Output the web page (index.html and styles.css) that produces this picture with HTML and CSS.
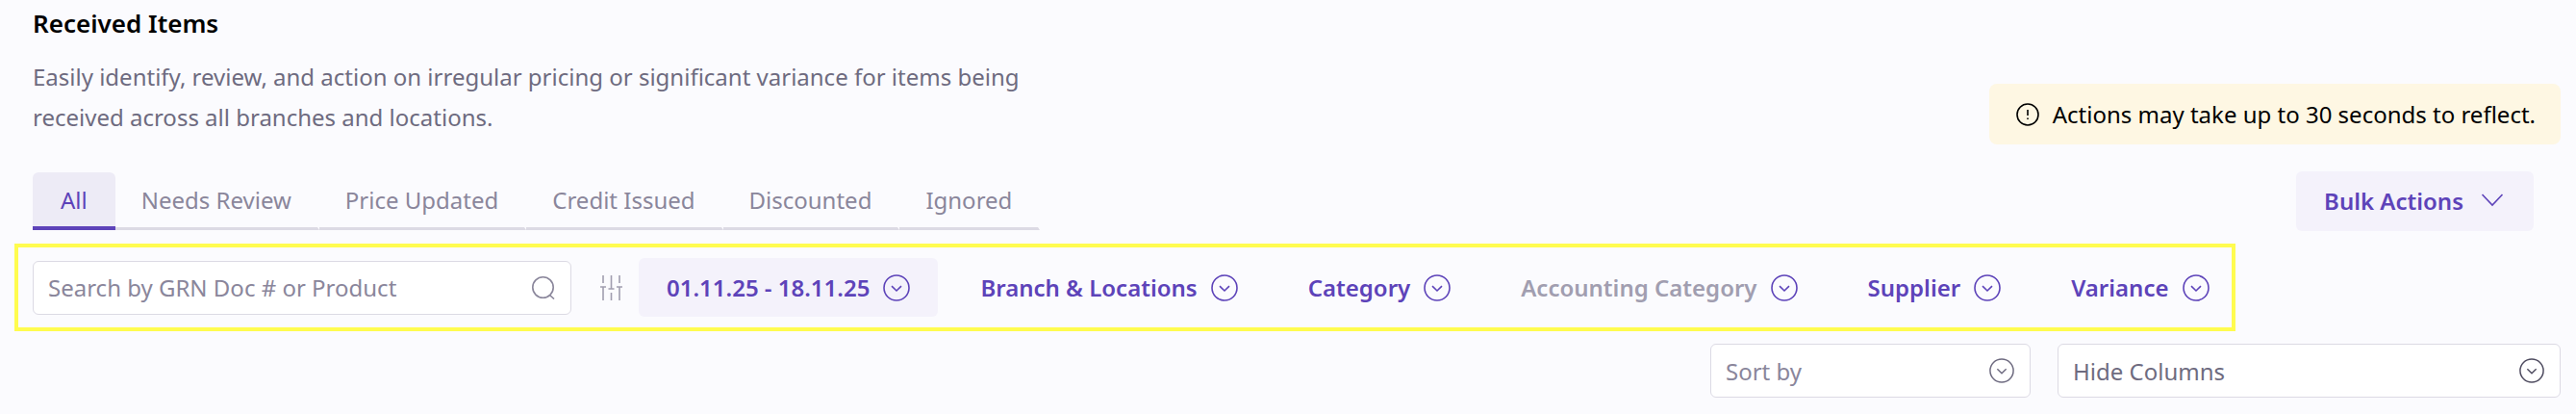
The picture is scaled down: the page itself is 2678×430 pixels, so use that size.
FILE: index.html
```html
<!DOCTYPE html>
<html lang="en">
<head>
  <meta charset="UTF-8">
  <title>Received Items</title>
  <link rel="stylesheet" href="styles.css">
</head>
<body>
  <!-- shared icons -->
  <svg class="sprite" aria-hidden="true">
    <symbol id="circle-chevron" viewBox="0 0 28 28">
      <circle cx="14" cy="14" r="13"/>
      <path d="M9 12.2l5 4.8 5-4.8"/>
    </symbol>
  </svg>

  <header class="page-header">
    <div class="intro">
      <h1>Received Items</h1>
      <p>Easily identify, review, and action on irregular pricing or significant variance for items being received across all branches and locations.</p>
    </div>
    <div class="notice">
      <svg class="icon-sm" viewBox="0 0 24 24">
        <circle cx="12" cy="12" r="11"/>
        <path d="M12 7v6M12 15.5v1.5"/>
      </svg>
      <span>Actions may take up to 30 seconds to reflect.</span>
    </div>
  </header>

  <div class="tab-row">
    <nav class="tabs">
      <button class="tab active">All</button>
      <button class="tab">Needs Review</button>
      <button class="tab">Price Updated</button>
      <button class="tab">Credit Issued</button>
      <button class="tab">Discounted</button>
      <button class="tab">Ignored</button>
    </nav>
    <button class="bulk">
      Bulk Actions
      <svg class="icon-sm" viewBox="0 0 24 24"><path d="M1.500 6l10.500 11 10.500-11"/></svg>
    </button>
  </div>

  <!-- Filters -->
  <section class="filters">
    <label class="search">
      <input type="text" placeholder="Search by GRN Doc # or Product" aria-label="Search">
      <svg class="icon-sm" viewBox="0 0 24 24">
        <circle cx="11.500" cy="11.500" r="10.700"/>
        <path d="M18.500 19.500l4.500 4"/>
      </svg>
    </label>
    <svg class="sliders" viewBox="0 0 23 26">
      <path d="M3 0v8M3 12v14M0 12h6M11.500 0v14M8.500 14h6M11.500 18v8M20 0v8M20 12v14M17 12h6"/>
    </svg>
    <div class="chips">
      <button class="chip selected">01.11.25 - 18.11.25 <svg class="icon"><use href="#circle-chevron"/></svg></button>
      <button class="chip">Branch &amp; Locations <svg class="icon"><use href="#circle-chevron"/></svg></button>
      <button class="chip">Category <svg class="icon"><use href="#circle-chevron"/></svg></button>
      <button class="chip"><span class="muted">Accounting Category</span> <svg class="icon"><use href="#circle-chevron"/></svg></button>
      <button class="chip">Supplier <svg class="icon"><use href="#circle-chevron"/></svg></button>
      <button class="chip">Variance <svg class="icon"><use href="#circle-chevron"/></svg></button>
    </div>
  </section>

  <!-- Table options -->
  <div class="options">
    <div class="select sort">
      <select aria-label="Sort by">
        <option>Sort by</option>
      </select>
      <svg class="icon"><use href="#circle-chevron"/></svg>
    </div>
    <div class="select columns">
      <select aria-label="Hide Columns">
        <option>Hide Columns</option>
      </select>
      <svg class="icon"><use href="#circle-chevron"/></svg>
    </div>
  </div>
</body>
</html>
```

FILE: styles.css
```css
* {
  box-sizing: border-box;
}

body {
  margin: 0;
  padding: 0 16px 0 34px;
  background: #fbfbfe;
  font-family: "Noto Sans", sans-serif;
  font-size: 24px;
  color: #6e6b80;
}

button, input, select {
  font: inherit;
  color: inherit;
  border: none;
  background: none;
}

button {
  cursor: pointer;
}

svg {
  fill: none;
  stroke: currentColor;
  stroke-width: 1.6;
  flex-shrink: 0;
}

.sprite {
  display: none;
}

.icon {
  width: 28px;
  height: 28px;
}

.icon-sm {
  width: 24px;
  height: 24px;
}

.page-header {
  display: flex;
  justify-content: space-between;
  align-items: flex-end;
}

.intro {
  max-width: 1040px;
  padding-bottom: 7px;
}

h1 {
  margin: 0;
  padding: 4px 0 14px;
  font-size: 26px;
  line-height: 41px;
  font-weight: 600;
  color: #000;
}

.intro p {
  margin: 0;
  line-height: 42px;
}

.notice {
  display: flex;
  align-items: center;
  gap: 14px;
  height: 63px;
  padding: 0 26px 0 28px;
  border-radius: 8px;
  background: #fef7e3;
  color: #000;
}

.tab-row {
  display: flex;
  justify-content: space-between;
  align-items: center;
  margin-top: 28px;
  padding-right: 28px;
}

.tabs {
  display: flex;
}

.tab {
  height: 60px;
  padding: 0 27px;
  border-right: 2px solid transparent;
  border-bottom: 3px solid #dcdae4;
  color: #8a869b;
}

.tab.active {
  padding: 0 29px;
  border-right: none;
  border-bottom: 4px solid #5d43b9;
  border-radius: 6px 6px 0 0;
  background: #edebf6;
  color: #5d43b9;
}

.bulk {
  display: flex;
  align-items: center;
  gap: 18px;
  height: 62px;
  padding: 0 31px 2px 29px;
  border-radius: 6px;
  background: #f4f2fb;
  color: #5d43b9;
  font-weight: 600;
}

.filters {
  display: flex;
  align-items: center;
  width: fit-content;
  margin: 13px 0 13px -19px;
  padding: 11px 0 11px 15px;
  border: 4px solid #fffc4f;
}

.search {
  display: flex;
  align-items: center;
  width: 560px;
  height: 56px;
  padding: 0 16px 0 15px;
  border: 1px solid #dcdae4;
  border-radius: 6px;
  background: #fff;
  color: #8a869b;
}

.search input {
  flex: 1;
  min-width: 0;
  padding: 0;
  outline: none;
}

.search input::placeholder {
  color: #8a869b;
  opacity: 1;
}

.sliders {
  width: 23px;
  height: 26px;
  margin: 0 17px 0 30px;
  color: #a19eb0;
}

.chips {
  display: flex;
  gap: 15px;
}

.chip {
  display: flex;
  align-items: center;
  gap: 14px;
  height: 61px;
  padding: 0 29px;
  border-radius: 6px;
  color: #5d43b9;
  font-weight: 600;
}

.chip.selected {
  background: #f4f2fb;
}

.chip:last-child {
  padding-right: 23px;
}

.muted {
  color: #a19eb0;
}

.options {
  display: flex;
  justify-content: flex-end;
  gap: 28px;
}

.select {
  position: relative;
}

.select select {
  width: 100%;
  height: 56px;
  padding: 0 56px 0 15px;
  border: 1px solid #dcdae4;
  border-radius: 6px;
  background: #fff;
  appearance: none;
}

/* arrow sits on top of the select */
.select .icon {
  position: absolute;
  top: 15px;
  right: 17px;
  width: 26px;
  height: 26px;
  pointer-events: none;
}

.sort {
  width: 333px;
}

.sort select {
  color: #8a869b;
}

.columns {
  width: 523px;
}

.columns .icon {
  color: #4f4c60;
}
```
